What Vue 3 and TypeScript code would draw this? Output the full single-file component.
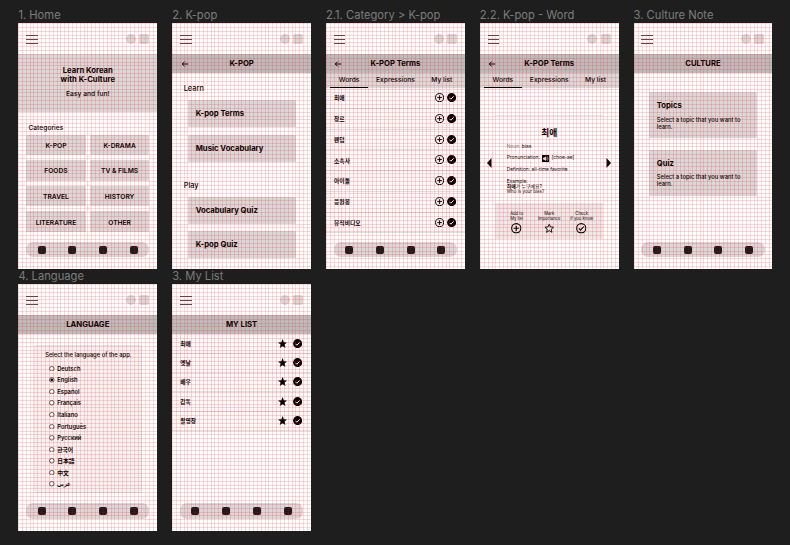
<script setup lang="ts">
type Kind = 'home' | 'kpop' | 'terms' | 'word' | 'culture' | 'language' | 'mylist'

interface Board {
  kind: Kind
  label: string
  title?: string
  back?: boolean
  nav?: boolean
}

const boards: Board[] = [
  { kind: 'home', label: '1. Home', nav: true },
  { kind: 'kpop', label: '2. K-pop', title: 'K-POP', back: true },
  { kind: 'terms', label: '2.1. Category > K-pop', title: 'K-POP Terms', back: true, nav: true },
  { kind: 'word', label: '2.2. K-pop - Word', title: 'K-POP Terms', back: true },
  { kind: 'culture', label: '3. Culture Note', title: 'CULTURE', nav: true },
  { kind: 'language', label: '4. Language', title: 'LANGUAGE', nav: true },
  { kind: 'mylist', label: '3. My List', title: 'MY LIST', nav: true },
]

const categories: string[] = ['K-POP', 'K-DRAMA', 'FOODS', 'TV & FILMS', 'TRAVEL', 'HISTORY', 'LITERATURE', 'OTHER']
const sections = [
  { name: 'Learn', items: ['K-pop Terms', 'Music Vocabulary'] },
  { name: 'Play', items: ['Vocabulary Quiz', 'K-pop Quiz'] },
]
const tabs: string[] = ['Words', 'Expressions', 'My list']
const terms: string[] = ['최애', '장르', '팬덤', '소속사', '아이돌', '응원봉', '뮤직비디오']
const saved: string[] = ['최애', '옛날', '배우', '감독', '촬영장']
const topics: string[] = ['Topics', 'Quiz']
const languages: string[] = ['Deutsch', 'English', 'Español', 'Français', 'Italiano', 'Português', 'Русский', '한국어', '日本語', '中文', 'عربي']
const actions = [
  { lines: ['Add to', 'My list'], icon: '#i-plus' },
  { lines: ['Mark', 'Importance'], icon: '#i-star-line' },
  { lines: ['Check', 'if you know'], icon: '#i-check-line' },
]

const step = 3.856
const columns: number[] = Array.from({ length: 36 }, (_, i) => i * step)
const rows: number[] = Array.from({ length: 64 }, (_, i) => i * step)
</script>

<template>
  <main class="canvas">
    <svg class="defs" aria-hidden="true">
      <symbol id="i-plus" viewBox="0 0 24 24">
        <circle cx="12" cy="12" r="10.5" fill="none" stroke="#000" stroke-width="2.6" />
        <path d="M12 6v12M6 12h12" stroke="#000" stroke-width="2.6" />
      </symbol>
      <symbol id="i-check" viewBox="0 0 24 24">
        <circle cx="12" cy="12" r="11.8" fill="#000" />
        <path d="M6.500 12.500l3.700 3.700 7.300-7.700" fill="none" stroke="#fff" stroke-width="2.500" />
      </symbol>
      <symbol id="i-check-line" viewBox="0 0 24 24">
        <circle cx="12" cy="12" r="10.5" fill="none" stroke="#000" stroke-width="2.600" />
        <path d="M6.500 12.500l3.700 3.700 7.500-8" fill="none" stroke="#000" stroke-width="2.600" />
      </symbol>
      <symbol id="i-star" viewBox="0 0 24 24">
        <path d="M12 0l3.300 8.200 8.700.7-6.700 5.700 2.100 8.900L12 18.900l-7.400 4.600 2.100-8.900L0 8.900l8.700-.7z" fill="#000" />
      </symbol>
      <symbol id="i-star-line" viewBox="0 0 24 24">
        <path d="M12 2.500l2.800 6.500 7.100.6-5.400 4.700 1.700 7-6.200-3.800-6.200 3.800 1.700-7-5.400-4.700 7.100-.6z" fill="none" stroke="#000" stroke-width="2.100" />
      </symbol>
    </svg>

    <section v-for="b in boards" :key="b.label" class="board">
      <h2 class="label">{{ b.label }}</h2>
      <div class="phone">
        <header class="top">
          <div class="burger"><i /><i /><i /></div>
          <div class="shapes"><i class="dot" /><i class="tile" /></div>
        </header>

        <div v-if="b.title" class="bar">
          <svg v-if="b.back" class="back" viewBox="0 0 16 16">
            <path d="M14.500 8H2.500M7.500 3l-5 5 5 5" fill="none" stroke="#000" stroke-width="1.900" />
          </svg>
          <span>{{ b.title }}</span>
        </div>

        <div v-if="b.kind === 'terms' || b.kind === 'word'" class="tabs">
          <span v-for="(t, i) in tabs" :key="t" :class="{ on: i === 0 }">{{ t }}</span>
        </div>

        <template v-if="b.kind === 'home'">
          <div class="hero">
            <strong>Learn Korean<br />with K-Culture</strong>
            <p>Easy and fun!</p>
          </div>
          <div class="cat-title">Categories</div>
          <div class="cats">
            <div v-for="c in categories" :key="c" class="cat">{{ c }}</div>
          </div>
        </template>

        <div v-else-if="b.kind === 'kpop'" class="menu">
          <div v-for="s in sections" :key="s.name" class="group">
            <h3>{{ s.name }}</h3>
            <div v-for="item in s.items" :key="item" class="entry">{{ item }}</div>
          </div>
        </div>

        <div v-else-if="b.kind === 'terms'" class="list">
          <div v-for="t in terms" :key="t" class="item">
            <span>{{ t }}</span>
            <svg><use href="#i-plus" /></svg>
            <svg><use href="#i-check" /></svg>
          </div>
        </div>

        <div v-else-if="b.kind === 'word'" class="word">
          <svg class="tri" viewBox="0 0 5 10"><path d="M4.500 0v10L0 5z" /></svg>
          <div class="sheet">
            <div class="head">최애</div>
            <div class="facts">
              <p><em>Noun:</em> bias</p>
              <p class="say">
                Pronunciation:
                <svg viewBox="0 0 14 14">
                  <rect width="14" height="14" />
                  <path d="M2 5.300h2.200L7.500 2.500v9L4.200 8.700H2z" fill="#fff" />
                  <path d="M9 4.800q1.500 2.200 0 4.400M10.500 3q3 4 0 8" fill="none" stroke="#fff" stroke-width="1" />
                </svg>
                [choe-ae]
              </p>
              <p>Definition: all-time favorite</p>
              <p class="example">Example:<br /><b>최애</b>가 누구예요?<br /><small>Who is your bias?</small></p>
            </div>
            <div class="actions">
              <div v-for="a in actions" :key="a.icon" class="action">
                <span>{{ a.lines[0] }}<br />{{ a.lines[1] }}</span>
                <svg><use :href="a.icon" /></svg>
              </div>
            </div>
          </div>
          <svg class="tri" viewBox="0 0 5 10"><path d="M.5 0v10L5 5z" /></svg>
        </div>

        <div v-else-if="b.kind === 'culture'" class="topics">
          <article v-for="t in topics" :key="t">
            <h3>{{ t }}</h3>
            <p>Select a topic that you want to<br />learn.</p>
          </article>
        </div>

        <div v-else-if="b.kind === 'language'" class="langs">
          <p>Select the language of the app.</p>
          <div v-for="l in languages" :key="l" class="lang">
            <svg viewBox="0 0 12 12">
              <circle cx="6" cy="6" r="5" fill="#fff" stroke="#222" stroke-width="1.500" />
              <circle v-if="l === 'English'" cx="6" cy="6" r="3" />
            </svg>
            <span>{{ l }}</span>
          </div>
        </div>

        <div v-else class="list saved">
          <div v-for="s in saved" :key="s" class="item">
            <span>{{ s }}</span>
            <svg><use href="#i-star" /></svg>
            <svg><use href="#i-check" /></svg>
          </div>
        </div>

        <nav v-if="b.nav" class="nav"><i v-for="n in 4" :key="n" /></nav>

        <svg class="mesh" aria-hidden="true">
          <rect v-for="x in columns" :key="'c' + x" :x="x" y="0" width="1" height="247" />
          <rect v-for="y in rows" :key="'r' + y" x="0" :y="y" width="139" height="1" />
        </svg>
      </div>
    </section>
  </main>
</template>

<style>
body {
  background: #1e1e1e;
  overflow: hidden;
}
</style>

<style scoped>
* {
  box-sizing: border-box;
  margin: 0;
  padding: 0;
}
.canvas {
  height: 545px;
  padding: 8px 0 0 18.400px;
  display: grid;
  grid-template-columns: repeat(5, 138.800px);
  grid-auto-rows: 261.300px;
  align-content: start;
  column-gap: 15px;
  background: #1e1e1e;
  color: #000;
  font-family: Inter, "Noto Sans CJK KR", "Noto Sans", sans-serif;
  white-space: nowrap;
}
.defs {
  position: absolute;
  width: 0;
  height: 0;
}
.label {
  height: 14.600px;
  line-height: 15px;
  font-size: 11.200px;
  font-weight: 400;
  color: #7d7d7d;
}
.phone {
  position: relative;
  height: 246.700px;
  background: #fff;
  overflow: hidden;
  display: flex;
  flex-direction: column;
}
.mesh {
  position: absolute;
  inset: 0;
  width: 100%;
  height: 100%;
  fill: rgba(255, 0, 0, 0.15);
  shape-rendering: crispEdges;
}
.top {
  flex: none;
  height: 31.400px;
  padding: 1.600px 8px 0 7.800px;
  display: flex;
  align-items: center;
  justify-content: space-between;
}
.burger {
  width: 11.700px;
  display: grid;
  gap: 3px;
}
.burger i {
  height: 1px;
  background: #5c4a4a;
}
.shapes {
  display: flex;
  gap: 3.200px;
}
.shapes i {
  width: 10px;
  height: 10px;
  background: #d9d9d9;
}
.dot {
  border-radius: 50%;
}
.tile {
  border-radius: 2px;
}
.bar {
  position: relative;
  flex: none;
  height: 19.200px;
  display: flex;
  align-items: center;
  justify-content: center;
  background: #bcbcbc;
  font-size: 7.700px;
  font-weight: 700;
}
.back {
  position: absolute;
  left: 8.500px;
  width: 8px;
  height: 8px;
}
.tabs {
  flex: none;
  height: 15px;
  display: grid;
  grid-template-columns: 38.200px 1fr 38px;
  grid-template-rows: 14.600px;
  padding: 0 4px;
  background: #d9d9d9;
  font-size: 6.700px;
  font-weight: 500;
  line-height: 14px;
  text-align: center;
}
.on {
  border-bottom: 1px solid #000;
}
.hero {
  height: 57.800px;
  padding-top: 12px;
  background: #d9d9d9;
  text-align: center;
}
.hero strong {
  display: block;
  font-size: 7.700px;
  line-height: 9.300px;
}
.hero p {
  margin-top: 5.300px;
  font-size: 6.700px;
  font-weight: 500;
  line-height: 9px;
}
.cat-title {
  padding-left: 10px;
  margin-top: 10.900px;
  height: 12px;
  line-height: 10.500px;
  font-size: 6.700px;
  font-weight: 500;
}
.cats {
  padding: 0 7.800px;
  display: grid;
  grid-template-columns: 1fr 1fr;
  grid-auto-rows: 20.600px;
  gap: 5px 4px;
}
.cat {
  display: flex;
  align-items: center;
  justify-content: center;
  border-radius: 1px;
  background: #d9d9d9;
  font-size: 6.700px;
  font-weight: 600;
  padding-top: 1.500px;
}
.nav {
  position: absolute;
  left: 7.800px;
  right: 7.800px;
  top: 219.300px;
  height: 15.500px;
  padding: 0 11.500px;
  display: flex;
  align-items: center;
  justify-content: space-between;
  border-radius: 7px;
  background: #d9d9d9;
}
.nav i {
  width: 8px;
  height: 8px;
  border-radius: 2px;
  background: #1c1c1c;
}
.menu {
  padding: 10.500px 15px 0 15.500px;
  display: grid;
  gap: 19px;
}
.group {
  display: grid;
  gap: 7.700px;
}
.group h3 {
  height: 8.500px;
  margin-left: -4px;
  font-size: 7.400px;
  font-weight: 500;
  line-height: 10.400px;
}
.entry {
  height: 27px;
  padding-left: 8px;
  border-radius: 1.500px;
  background: #d9d9d9;
  font-size: 7.700px;
  font-weight: 700;
  line-height: 27.500px;
}
.list {
  display: grid;
  grid-auto-rows: 20.750px;
}
.item {
  padding: 0 9px 0.500px 8px;
  display: flex;
  align-items: center;
  gap: 2.200px;
  background: #fafafa;
  border-bottom: 1px solid #e3e0e0;
  font-size: 5.800px;
  font-weight: 700;
}
.item span {
  flex: 1;
}
.item svg {
  width: 9.200px;
  height: 9.200px;
}
.saved {
  grid-auto-rows: 19.280px;
}
.saved .item {
  gap: 6px;
  padding-right: 8.900px;
}
.word {
  display: flex;
  justify-content: space-between;
  padding: 27px 7.500px 0;
}
.tri {
  width: 5px;
  height: 10px;
  margin-top: 42.800px;
}
.sheet {
  width: 107.800px;
  height: 124px;
  border-top: 1px solid #f0eded;
  display: flex;
  flex-direction: column;
}
.head {
  margin-top: 10.500px;
  text-align: center;
  font-size: 8.700px;
  font-weight: 700;
  line-height: 12px;
}
.facts {
  padding: 5px 0 0 11.400px;
  flex: 1;
  font-size: 4.900px;
  line-height: 5.300px;
}
.facts p {
  height: 11.700px;
}
.facts em {
  font-style: normal;
  color: #777;
}
.facts .say {
  display: flex;
  align-items: flex-start;
  gap: 2px;
}
.say svg {
  width: 7.200px;
  height: 7.200px;
  margin: -0.500px 0 0 0.500px;
}
.facts small {
  font-size: 4.500px;
}
.actions {
  height: 36px;
  display: grid;
  grid-template-columns: repeat(3, 32.500px);
  justify-content: center;
  background: #ebe9e9;
}
.action {
  padding-top: 9.300px;
  display: flex;
  flex-direction: column;
  align-items: center;
  font-size: 4.200px;
  line-height: 4.700px;
  text-align: center;
}
.action svg {
  width: 10.500px;
  height: 10.500px;
  margin-top: 1.300px;
}
.topics {
  padding: 18.900px 15px 0 15.500px;
  display: grid;
  gap: 11.500px;
}
.topics article {
  height: 46.200px;
  padding: 8.900px 8px 0 7.700px;
  border-radius: 1.500px;
  background: #d9d9d9;
}
.topics h3 {
  font-size: 7.700px;
  line-height: 10px;
}
.topics p {
  margin-top: 4.700px;
  font-size: 5.800px;
  font-weight: 500;
  line-height: 7px;
}
.langs {
  width: 108.500px;
  height: 147.600px;
  margin: 11px 0 0 15.500px;
  padding: 5px 0 0 10.300px;
  border: 1px solid #e9e7e7;
  border-radius: 2px;
  background: #f4f2f2;
}
.langs p {
  height: 11.300px;
  font-size: 5.800px;
  font-weight: 500;
  line-height: 8px;
}
.lang {
  height: 11.560px;
  padding-left: 4px;
  display: flex;
  align-items: center;
  gap: 2.500px;
  font-size: 5.800px;
  font-weight: 600;
  line-height: 11.560px;
}
.lang svg {
  width: 5.500px;
  height: 5.500px;
}
</style>
